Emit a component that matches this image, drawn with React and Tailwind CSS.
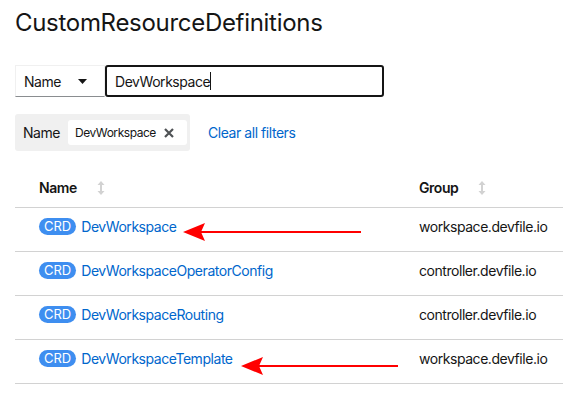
import React from "react";

const rows = [
  { name: "DevWorkspace", group: "workspace.devfile.io" },
  { name: "DevWorkspaceOperatorConfig", group: "controller.devfile.io" },
  { name: "DevWorkspaceRouting", group: "controller.devfile.io" },
  { name: "DevWorkspaceTemplate", group: "workspace.devfile.io" },
];

function SortIcon() {
  return (
    <svg width="8" height="14" viewBox="0 0 8 14" className="ml-[20px]">
      <path d="M4 0 L7.5 4 H5 V10 H7.5 L4 14 L0.5 10 H3 V4 H0.5 Z" fill="#d2d2d2" />
    </svg>
  );
}

export default function App() {
  return (
    <div
      className="relative w-[563px] h-[405px] bg-white text-[#151515] overflow-hidden tracking-[-0.45px]"
      style={{ fontFamily: "Inter, 'Noto Sans', sans-serif" }}
    >
      <div className="pl-[15px] pt-[8px]">
        <h1 className="text-[24px] leading-[30px] font-normal tracking-[-0.3px]">CustomResourceDefinitions</h1>

        <div className="mt-[27px] flex h-[32px]">
          <button className="w-[90px] h-[32px] flex items-center justify-between pl-[8px] pr-[17px] border border-[#f0f0f0] border-b-[#8a8d90] text-[14px]">
            <span>Name</span>
            <svg width="9" height="5" viewBox="0 0 9 5">
              <path d="M0 0 H9 L4.5 5 Z" fill="#151515" />
            </svg>
          </button>
          <div className="w-[279px] h-[32px] border-2 border-[#151515] rounded-[3px] flex items-center pl-[8px] text-[14px]">
            <span>DevWorkspace</span>
            <span className="w-px h-[18px] bg-[#151515]" />
          </div>
        </div>

        <div className="mt-[17px] flex items-center">
          <div className="h-[37px] w-[175px] bg-[#f0f0f0] rounded-[3px] flex items-center pl-[8px]">
            <span className="text-[14px] text-[#151515]">Name</span>
            <div className="ml-[8px] h-[25px] w-[119px] bg-white rounded-[3px] flex items-center pl-[7px] pr-[13px] justify-between">
              <span className="text-[12px]">DevWorkspace</span>
              <svg width="10" height="10" viewBox="0 0 10 10">
                <path d="M1 1 L9 9 M9 1 L1 9" stroke="#4f5255" strokeWidth="2.2" />
              </svg>
            </div>
          </div>
          <span className="ml-[18px] text-[14px] text-[#0066cc]">Clear all filters</span>
        </div>

        <div className="mt-[17px]">
          <div className="flex h-[40px] items-center border-b border-[#d2d2d2] text-[14px] font-semibold">
            <div className="w-[404px] pl-[24px] flex items-center">
              Name
              <SortIcon />
            </div>
            <div className="flex items-center">
              Group
              <SortIcon />
            </div>
          </div>
          {rows.map((r) => (
            <div key={r.name} className="flex h-[44px] items-center pb-[6px] border-b border-[#d2d2d2] text-[14px]">
              <div className="w-[404px] pl-[24px] flex items-center">
                <span className="h-[17px] px-[5px] rounded-full bg-[#3e8ef0] text-white text-[13px] leading-[17px] tracking-normal">CRD</span>
                <span className="ml-[5px] text-[#0066cc]">{r.name}</span>
              </div>
              <div>{r.group}</div>
            </div>
          ))}
        </div>
      </div>

      <svg className="absolute left-0 top-0 pointer-events-none" width="563" height="405">
        <line x1="200" y1="232" x2="361" y2="232" stroke="#ff0000" strokeWidth="2" />
        <path d="M183 232 L205 223 L201 232 L205 241 Z" fill="#ff0000" />
        <line x1="258" y1="366" x2="398" y2="366" stroke="#ff0000" strokeWidth="2" />
        <path d="M241 366 L263 357 L259 366 L263 375 Z" fill="#ff0000" />
      </svg>
    </div>
  );
}
